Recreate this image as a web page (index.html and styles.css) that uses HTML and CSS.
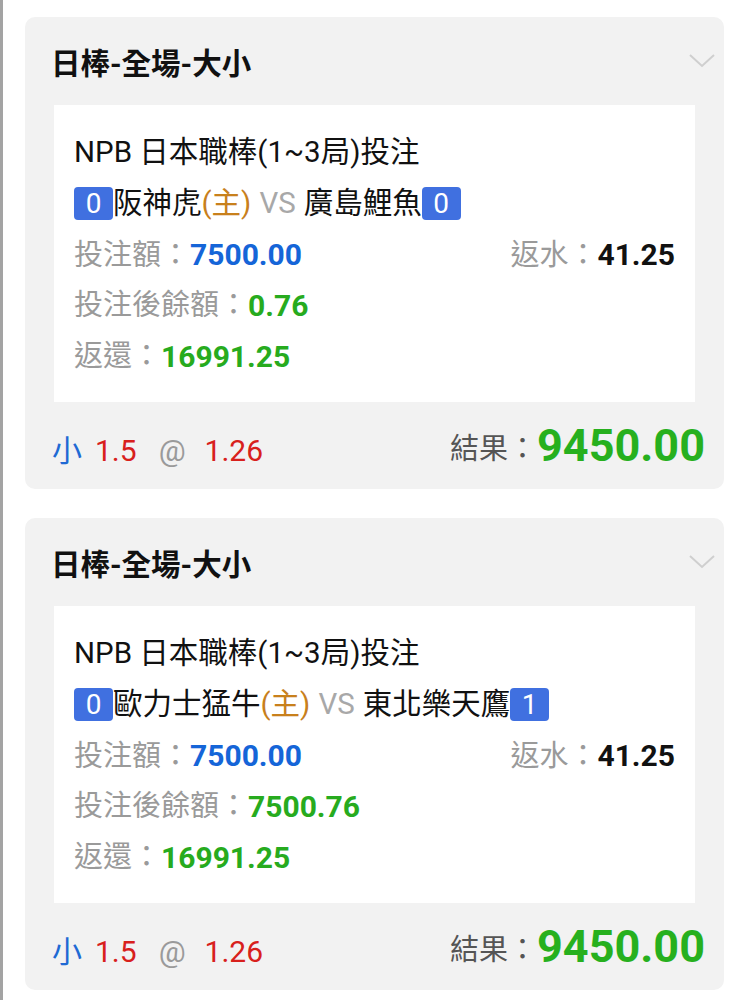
FILE: index.html
```html
<!DOCTYPE html>
<html lang="zh-Hant">
<head>
<meta charset="utf-8">
<link rel="stylesheet" href="styles.css">
</head>
<body>
<div class="page">
  <div class="card">
    <div class="card-head">
      <div class="title">日棒-全場-大小</div>
      <svg class="chev" width="28" height="16" viewBox="0 0 28 16"><path d="M2 2 L14 13 L26 2" fill="none" stroke="#cfcfcf" stroke-width="2"/></svg>
    </div>
    <div class="box">
      <div class="line">NPB 日本職棒(1~3局)投注</div>
      <div class="line"><span class="badge">0</span>阪神虎<span class="home">(主)</span> <span class="vs">VS</span> 廣島鯉魚<span class="badge">0</span></div>
      <div class="line split">
        <span><span class="lbl">投注額：</span><span class="num blue">7500.00</span></span>
        <span><span class="lbl">返水：</span><span class="num dark">41.25</span></span>
      </div>
      <div class="line"><span class="lbl">投注後餘額：</span><span class="num green">0.76</span></div>
      <div class="line"><span class="lbl">返還：</span><span class="num green">16991.25</span></div>
    </div>
    <div class="card-foot">
      <div class="odds"><span class="ou">小</span><span class="red">1.5</span><span class="at">@</span><span class="red">1.26</span></div>
      <div class="result"><span class="rlbl">結果：</span><span class="big">9450.00</span></div>
    </div>
  </div>

  <div class="card">
    <div class="card-head">
      <div class="title">日棒-全場-大小</div>
      <svg class="chev" width="28" height="16" viewBox="0 0 28 16"><path d="M2 2 L14 13 L26 2" fill="none" stroke="#cfcfcf" stroke-width="2"/></svg>
    </div>
    <div class="box">
      <div class="line">NPB 日本職棒(1~3局)投注</div>
      <div class="line"><span class="badge">0</span>歐力士猛牛<span class="home">(主)</span> <span class="vs">VS</span> 東北樂天鷹<span class="badge">1</span></div>
      <div class="line split">
        <span><span class="lbl">投注額：</span><span class="num blue">7500.00</span></span>
        <span><span class="lbl">返水：</span><span class="num dark">41.25</span></span>
      </div>
      <div class="line"><span class="lbl">投注後餘額：</span><span class="num green">7500.76</span></div>
      <div class="line"><span class="lbl">返還：</span><span class="num green">16991.25</span></div>
    </div>
    <div class="card-foot">
      <div class="odds"><span class="ou">小</span><span class="red">1.5</span><span class="at">@</span><span class="red">1.26</span></div>
      <div class="result"><span class="rlbl">結果：</span><span class="big">9450.00</span></div>
    </div>
  </div>
</div>
</body>
</html>
```
FILE: styles.css
```css
html, body {
  margin: 0;
  padding: 0;
  background: #ffffff;
}
body {
  font-family: Roboto, "Noto Sans CJK TC", sans-serif;
  color: #111;
  border-left: 3px solid #a3a3a3;
  min-height: 1000px;
  box-sizing: border-box;
}
.page {
  padding: 17px 21px 0 22px;
}
.card {
  background: #f2f2f2;
  border-radius: 10px;
  height: 472px;
  margin-bottom: 29px;
  display: flex;
  flex-direction: column;
}
.card-head {
  height: 88px;
  display: flex;
  align-items: center;
  justify-content: space-between;
  padding: 0 8px 0 26px;
}
.title {
  font-size: 29.5px;
  font-weight: 700;
  color: #111;
}
.chev {
  display: block;
}
.box {
  background: #fff;
  margin: 0 29px;
  height: 297px;
  box-sizing: border-box;
  padding: 22px 20px 20px;
}
.line {
  height: 51px;
  line-height: 51px;
  font-size: 29.5px;
  white-space: nowrap;
  display: flex;
  align-items: center;
}
.line.split {
  justify-content: space-between;
}
.badge {
  display: inline-block;
  background: #4070e0;
  color: #fff;
  border-radius: 4px;
  width: 39px;
  height: 33px;
  line-height: 33px;
  text-align: center;
  font-size: 28px;
}
.home { color: #c8801c; }
.vs { color: #a8a8a8; margin: 0 8px; }
.lbl { color: #9a9a9a; font-size: 29px; }
.num { font-weight: 700; font-size: 30px; }
.blue { color: #1565d8; }
.green { color: #27ab1e; }
.dark { color: #111; }
.card-foot {
  flex: 1;
  display: flex;
  align-items: center;
  justify-content: space-between;
  padding: 0 19px 0 27px;
}
.odds {
  font-size: 30px;
  display: flex;
  align-items: baseline;
  gap: 13px;
  padding-top: 4px;
}
.ou { color: #1f6ad4; }
.red { color: #d8201c; }
.at { color: #9a9a9a; margin: 0 6px 0 9px; }
.result {
  display: flex;
  align-items: center;
}
.rlbl { color: #555; font-size: 29px; }
.big {
  color: #27b01e;
  font-size: 45px;
  font-weight: 700;
}
```
